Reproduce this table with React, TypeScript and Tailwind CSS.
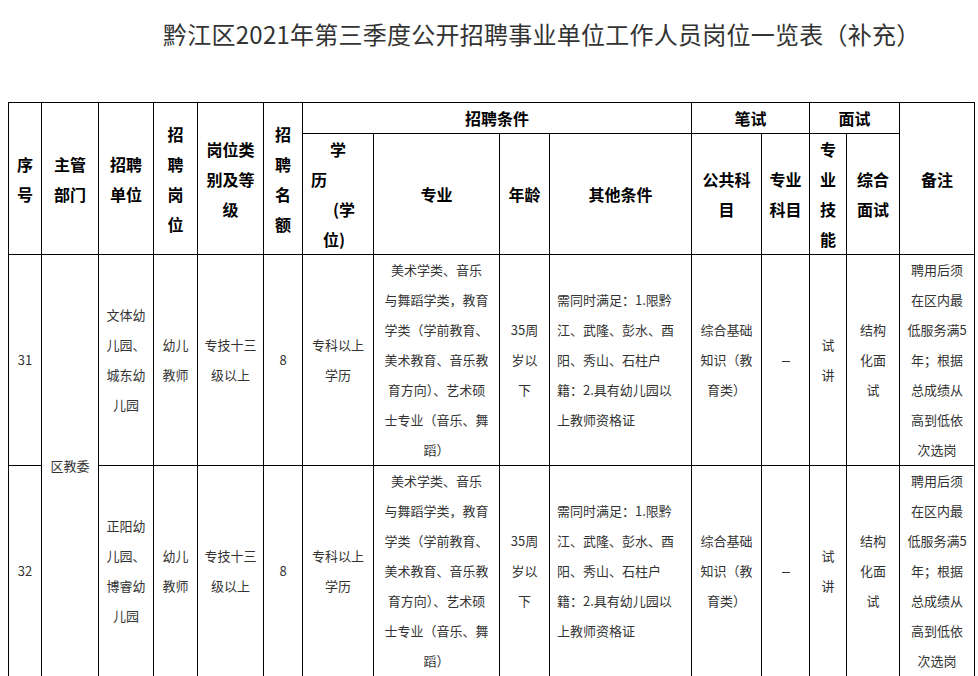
import React from 'react';

type Row = {
  no: string;
  unit: string[];
  post: string[];
  level: string[];
  count: string;
  edu: string[];
  major: string[];
  age: string[];
  other: string[];
  pub: string[];
  pro: string;
  skill: string[];
  interview: string[];
  note: string[];
};

const major = [
  '美术学类、音乐',
  '与舞蹈学类，教育',
  '学类（学前教育、',
  '美术教育、音乐教',
  '育方向）、艺术硕',
  '士专业（音乐、舞',
  '蹈）',
];

const other = [
  '需同时满足：1.限黔',
  '江、武隆、彭水、酉',
  '阳、秀山、石柱户',
  '籍：2.具有幼儿园以',
  '上教师资格证',
];

const note = ['聘用后须', '在区内最', '低服务满5', '年；根据', '总成绩从', '高到低依', '次选岗'];

const rows: Row[] = [
  {
    no: '31',
    unit: ['文体幼', '儿园、', '城东幼', '儿园'],
    post: ['幼儿', '教师'],
    level: ['专技十三', '级以上'],
    count: '8',
    edu: ['专科以上', '学历'],
    major,
    age: ['35周', '岁以', '下'],
    other,
    pub: ['综合基础', '知识（教', '育类）'],
    pro: '—',
    skill: ['试', '讲'],
    interview: ['结构', '化面', '试'],
    note,
  },
  {
    no: '32',
    unit: ['正阳幼', '儿园、', '博睿幼', '儿园'],
    post: ['幼儿', '教师'],
    level: ['专技十三', '级以上'],
    count: '8',
    edu: ['专科以上', '学历'],
    major,
    age: ['35周', '岁以', '下'],
    other,
    pub: ['综合基础', '知识（教', '育类）'],
    pro: '—',
    skill: ['试', '讲'],
    interview: ['结构', '化面', '试'],
    note,
  },
];

function Lines({ lines }: { lines: string[] }) {
  return (
    <>
      {lines.map((l, i) => (
        <div key={i} className="whitespace-nowrap">
          {l}
        </div>
      ))}
    </>
  );
}

const th = 'border border-black p-0 text-center align-middle font-bold text-[16px] leading-[30px] text-black';
const td = 'border border-black p-0 text-center align-middle text-[13px] leading-[30px] text-[#333]';

export default function App() {
  return (
    <div className="w-[978px] h-[676px] overflow-hidden bg-white font-['Noto_Sans_CJK_SC','Noto_Sans',sans-serif]">
      <h1 className="pt-[16px] pl-[163px] text-[24px] leading-[36px] tracking-[0.25px] font-normal text-[#333] whitespace-nowrap">
        黔江区2021年第三季度公开招聘事业单位工作人员岗位一览表（补充）
      </h1>
      <table className="mt-[50px] ml-[8px] w-[966px] table-fixed border-collapse">
        <colgroup>
          <col className="w-[33px]" />
          <col className="w-[57px]" />
          <col className="w-[55px]" />
          <col className="w-[44px]" />
          <col className="w-[66px]" />
          <col className="w-[39px]" />
          <col className="w-[71px]" />
          <col className="w-[126px]" />
          <col className="w-[50px]" />
          <col className="w-[142px]" />
          <col className="w-[70px]" />
          <col className="w-[48px]" />
          <col className="w-[37px]" />
          <col className="w-[53px]" />
          <col className="w-[75px]" />
        </colgroup>
        <thead>
          <tr className="h-[30px]">
            <th rowSpan={2} className={th}>
              <Lines lines={['序', '号']} />
            </th>
            <th rowSpan={2} className={th}>
              <Lines lines={['主管', '部门']} />
            </th>
            <th rowSpan={2} className={th}>
              <Lines lines={['招聘', '单位']} />
            </th>
            <th rowSpan={2} className={th}>
              <Lines lines={['招', '聘', '岗', '位']} />
            </th>
            <th rowSpan={2} className={th}>
              <Lines lines={['岗位类', '别及等', '级']} />
            </th>
            <th rowSpan={2} className={th}>
              <Lines lines={['招', '聘', '名', '额']} />
            </th>
            <th colSpan={4} className={th}>
              招聘条件
            </th>
            <th colSpan={2} className={th}>
              笔试
            </th>
            <th colSpan={2} className={th}>
              面试
            </th>
            <th rowSpan={2} className={th}>
              备注
            </th>
          </tr>
          <tr className="h-[121px]">
            <th className={th + ' !text-left'}>
              <div className="text-center">学</div>
              <div className="pl-[8px]">历</div>
              <div className="pl-[30px]">(学</div>
              <div className="pl-[20px]">位)</div>
            </th>
            <th className={th}>专业</th>
            <th className={th}>年龄</th>
            <th className={th}>其他条件</th>
            <th className={th}>
              <Lines lines={['公共科', '目']} />
            </th>
            <th className={th}>
              <Lines lines={['专业', '科目']} />
            </th>
            <th className={th}>
              <Lines lines={['专', '业', '技', '能']} />
            </th>
            <th className={th}>
              <Lines lines={['综合', '面试']} />
            </th>
          </tr>
        </thead>
        <tbody>
          {rows.map((r, idx) => (
            <tr key={r.no} className="h-[211px]">
              <td className={td}>{r.no}</td>
              {idx === 0 && (
                <td rowSpan={2} className={td}>
                  区教委
                </td>
              )}
              <td className={td}>
                <Lines lines={r.unit} />
              </td>
              <td className={td}>
                <Lines lines={r.post} />
              </td>
              <td className={td}>
                <Lines lines={r.level} />
              </td>
              <td className={td}>{r.count}</td>
              <td className={td}>
                <Lines lines={r.edu} />
              </td>
              <td className={td}>
                <Lines lines={r.major} />
              </td>
              <td className={td}>
                <Lines lines={r.age} />
              </td>
              <td className={td + ' !text-left pl-[7px]'}>
                <Lines lines={r.other} />
              </td>
              <td className={td}>
                <Lines lines={r.pub} />
              </td>
              <td className={td}>
                <span className="inline-block w-[8px] h-[1px] bg-[#333] align-middle" aria-label={r.pro} />
              </td>
              <td className={td}>
                <Lines lines={r.skill} />
              </td>
              <td className={td}>
                <Lines lines={r.interview} />
              </td>
              <td className={td}>
                <Lines lines={r.note} />
              </td>
            </tr>
          ))}
        </tbody>
      </table>
    </div>
  );
}
